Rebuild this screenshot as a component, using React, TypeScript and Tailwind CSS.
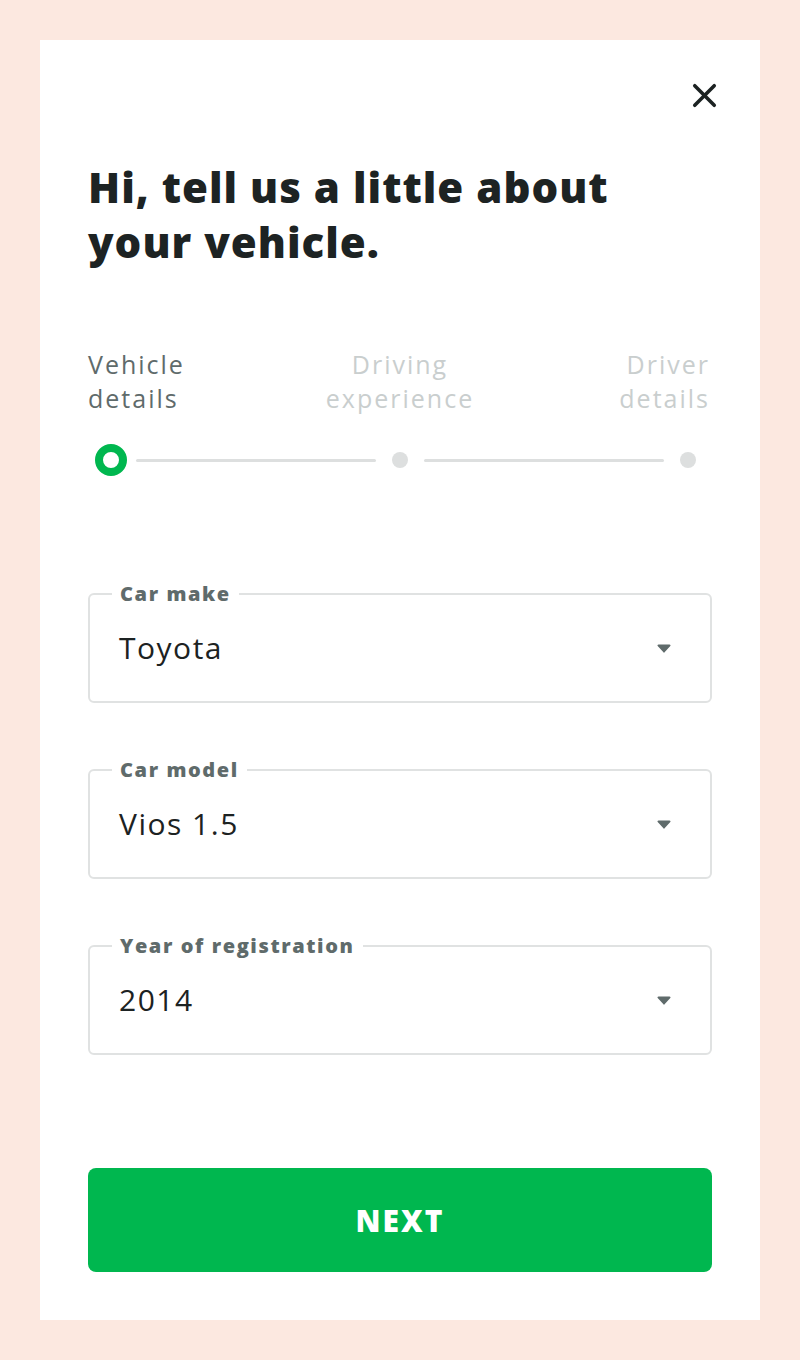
import { X } from "lucide-react";

const fields = [
  { label: "Car make", value: "Toyota" },
  { label: "Car model", value: "Vios 1.5" },
  { label: "Year of registration", value: "2014" },
];

function Caret() {
  return (
    <svg width="14" height="9" viewBox="0 0 14 9" className="shrink-0">
      <path d="M1.5 .5h11a1 1 0 0 1 .8 1.6l-5.5 6a1 1 0 0 1-1.6 0L.7 2.1A1 1 0 0 1 1.5.5z" fill="#5f6b6b" />
    </svg>
  );
}

function SelectField({ label, value }: { label: string; value: string }) {
  return (
    <div className="relative flex h-[110px] items-center justify-between rounded-md border-2 border-[#e0e2e2] pl-[29px] pr-[39px]">
      <span className="absolute -top-[13px] left-[22px] bg-white px-2 text-[20px] font-extrabold leading-[24px] tracking-[1.6px] text-[#5f6b6b]">
        {label}
      </span>
      <span className="text-[30px] leading-none tracking-[1.5px] text-[#1c2222]">{value}</span>
      <Caret />
    </div>
  );
}

function Stepper() {
  return (
    <div>
      <div className="grid grid-cols-3 text-[25px] leading-[34px] tracking-[2px]">
        <div className="text-[#5f6b6b]">
          Vehicle
          <br />
          details
        </div>
        <div className="text-center text-[#c9cece]">
          Driving
          <br />
          experience
        </div>
        <div className="pr-[2px] text-right text-[#c9cece]">
          Driver
          <br />
          details
        </div>
      </div>
      <div className="mt-[29px] flex items-center pl-[7px] pr-[16px]">
        <div className="h-8 w-8 shrink-0 rounded-full border-[8px] border-[#00b74f] bg-white" />
        <div className="ml-[9px] mr-[16px] h-[3px] flex-1 rounded bg-[#dddfdf]" />
        <div className="h-4 w-4 shrink-0 rounded-full bg-[#dddfdf]" />
        <div className="mx-[16px] h-[3px] flex-1 rounded bg-[#dddfdf]" />
        <div className="h-4 w-4 shrink-0 rounded-full bg-[#dddfdf]" />
      </div>
    </div>
  );
}

export default function App() {
  return (
    <div className="min-h-screen bg-[#fce8e0] p-10" style={{ fontFamily: "'Open Sans', 'Noto Sans', sans-serif" }}>
      <div className="flex h-[1280px] flex-col bg-white px-12">
        <div className="-mr-3 flex justify-end pt-[36px]">
          <X size={39} strokeWidth={2.2} color="#1c2222" />
        </div>
        <h1 className="mt-[44px] text-[42px] font-extrabold leading-[55px] tracking-[1px] text-[#1d2323]">
          Hi, tell us a little about
          <br />
          your vehicle.
        </h1>
        <div className="mt-[78px]">
          <Stepper />
        </div>
        <div className="mt-[117px] flex flex-col gap-[66px]">
          {fields.map((f) => (
            <SelectField key={f.label} label={f.label} value={f.value} />
          ))}
        </div>
        <button className="mt-[113px] h-[104px] w-full rounded-lg bg-[#00b74f] text-[30px] font-extrabold tracking-[2px] text-white">
          NEXT
        </button>
      </div>
    </div>
  );
}
